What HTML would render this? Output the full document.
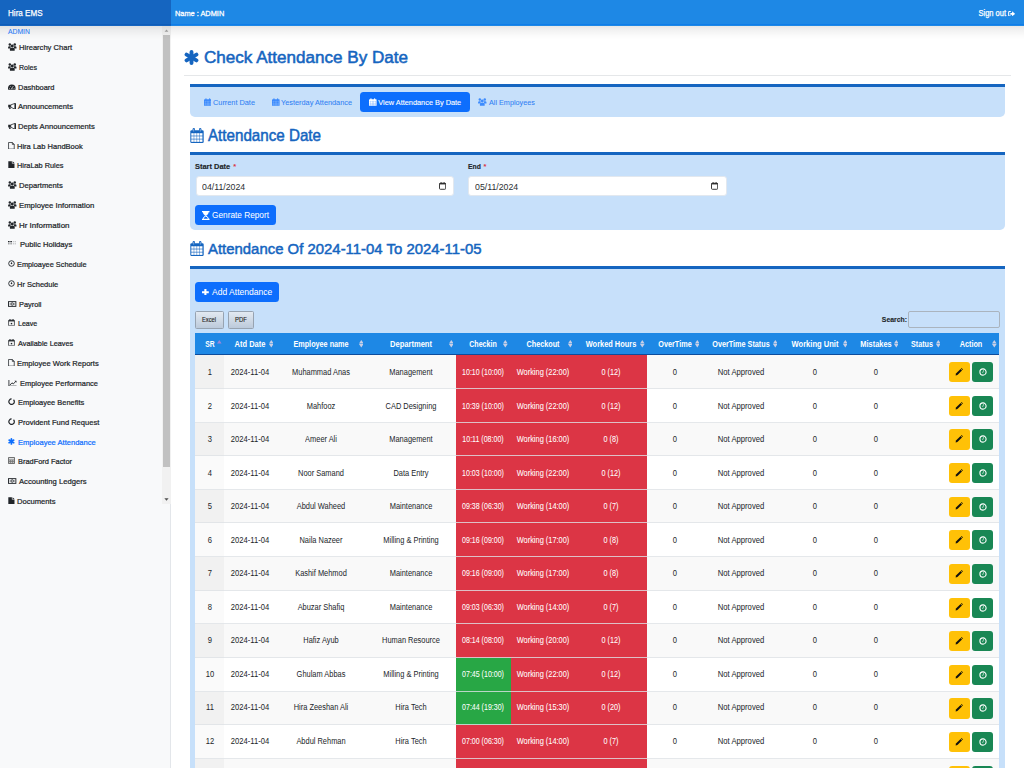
<!DOCTYPE html>
<html><head><meta charset="utf-8"><title>Check Attendance By Date</title>
<style>
*{box-sizing:border-box;margin:0;padding:0}
html,body{width:1024px;height:768px;overflow:hidden;background:#fff;font-family:"Liberation Sans", sans-serif}
body{position:relative}
.t{position:absolute;white-space:nowrap}
.r{position:absolute;display:block}
</style></head><body>
<div class="r" style="left:0.00px;top:0.00px;width:1024.00px;height:25.50px;background:#1e88e5"></div>
<div class="r" style="left:0.00px;top:0.00px;width:171.00px;height:25.50px;background:#1565c0"></div>
<div class="r" style="left:171.00px;top:23.90px;width:853.00px;height:1.60px;background:#0f7de9"></div>
<div class="r" style="left:0.00px;top:23.90px;width:171.00px;height:1.60px;background:#0f5cb8"></div>
<div class="t" style="left:8.40px;transform-origin:0 0;top:8px;font-size:9.072px;line-height:10px;color:#fff;font-weight:400;-webkit-text-stroke:0.25px #fff;transform:scaleX(0.8922);">Hira EMS</div>
<div class="t" style="left:175.00px;transform-origin:0 0;top:9px;font-size:7.844px;line-height:9px;color:#fff;font-weight:400;-webkit-text-stroke:0.28px #fff;transform:scaleX(0.9434);">Name : ADMIN</div>
<div class="t" style="left:706.30px;width:300px;text-align:right;transform-origin:100% 0;top:8px;font-size:8.512px;line-height:10px;color:#fff;font-weight:400;-webkit-text-stroke:0.25px #fff;transform:scaleX(0.8813);">Sign out</div>
<svg class="r" style="left:1008.00px;top:10.60px" width="7.4" height="5.6" viewBox="0 0 9 7"><path d="M3.4 0.7 H1.6 Q0.7 0.7 0.7 1.6 V5.4 Q0.7 6.3 1.6 6.3 H3.4" fill="none" stroke="#fff" stroke-width="1.3"/><path d="M2.8 2.4 H5 V0.3 L8.8 3.5 L5 6.7 V4.6 H2.8Z" fill="#fff"/></svg>
<div class="r" style="left:0.00px;top:25.50px;width:171.00px;height:742.50px;background:#f8f9fa;border-right:1px solid #e3e6ea"></div>
<div class="r" style="left:162.00px;top:25.50px;width:8.50px;height:478.00px;background:#f1f1f1"></div>
<div class="r" style="left:163.00px;top:35.00px;width:7.00px;height:432.00px;background:#c1c1c1"></div>
<svg class="r" style="left:163.00px;top:28.00px" width="7" height="5" viewBox="0 0 7 5"><path d="M1.6 3.8 L3.5 1.6 L5.4 3.8Z" fill="#a3a3a3"/></svg>
<svg class="r" style="left:163.00px;top:496.50px" width="7" height="5" viewBox="0 0 7 5"><path d="M1.4 1.3 L3.5 3.7 L5.6 1.3Z" fill="#505050"/></svg>
<div class="r" style="left:0;top:25.5px;width:1024px;height:14px;background:linear-gradient(rgba(0,0,0,0.095),rgba(0,0,0,0.05) 30%,rgba(0,0,0,0.015) 70%,rgba(0,0,0,0))"></div>
<div class="t" style="left:8.40px;transform-origin:0 0;top:27px;font-size:7.616px;line-height:9px;color:#2b7cf6;font-weight:400;-webkit-text-stroke:0.1px #2b7cf6;transform:scaleX(0.8887);">ADMIN</div>
<div class="t" style="left:18.75px;transform-origin:0 0;top:43px;font-size:7.875px;line-height:9px;color:#212529;font-weight:400;-webkit-text-stroke:0.22px #212529;transform:scaleX(0.9631);">Hirearchy Chart</div>
<svg class="r" style="left:8.20px;top:42.80px" width="8.6" height="7.8" viewBox="0 0 16 14"><g fill="#212529"><circle cx="3.4" cy="2.6" r="2.3"/><circle cx="12.6" cy="2.6" r="2.3"/><circle cx="8" cy="5.2" r="2.7"/><path d="M0.2 10.2 V7.8 Q0.2 5.6 2.6 5.6 H4.6 Q5.4 5.6 5.2 6.6 Q4.4 8.6 4.6 10.2Z"/><path d="M15.8 10.2 V7.8 Q15.8 5.6 13.4 5.6 H11.4 Q10.6 5.6 10.8 6.6 Q11.6 8.6 11.4 10.2Z"/><path d="M3.6 14 V11.4 Q3.6 8.8 6 8.8 H10 Q12.4 8.8 12.4 11.4 V14Z"/></g></svg>
<div class="t" style="left:18.75px;transform-origin:0 0;top:63px;font-size:7.875px;line-height:9px;color:#212529;font-weight:400;-webkit-text-stroke:0.22px #212529;transform:scaleX(0.8958);">Roles</div>
<svg class="r" style="left:8.20px;top:62.80px" width="8.6" height="7.8" viewBox="0 0 16 14"><g fill="#212529"><circle cx="3.4" cy="2.6" r="2.3"/><circle cx="12.6" cy="2.6" r="2.3"/><circle cx="8" cy="5.2" r="2.7"/><path d="M0.2 10.2 V7.8 Q0.2 5.6 2.6 5.6 H4.6 Q5.4 5.6 5.2 6.6 Q4.4 8.6 4.6 10.2Z"/><path d="M15.8 10.2 V7.8 Q15.8 5.6 13.4 5.6 H11.4 Q10.6 5.6 10.8 6.6 Q11.6 8.6 11.4 10.2Z"/><path d="M3.6 14 V11.4 Q3.6 8.8 6 8.8 H10 Q12.4 8.8 12.4 11.4 V14Z"/></g></svg>
<div class="t" style="left:18.25px;transform-origin:0 0;top:83px;font-size:7.875px;line-height:9px;color:#212529;font-weight:400;-webkit-text-stroke:0.22px #212529;transform:scaleX(0.9492);">Dashboard</div>
<svg class="r" style="left:8.40px;top:83.70px" width="7.6" height="6.4" viewBox="0 0 16 11.5"><path d="M0.4 11 Q0 9.5 0 8 A8 8 0 0 1 16 8 Q16 9.5 15.6 11Z" fill="#212529"/><g fill="#f8f9fa"><circle cx="3.2" cy="8" r="1"/><circle cx="5" cy="4" r="1"/><circle cx="11" cy="4" r="1"/><circle cx="12.8" cy="8" r="1"/><path d="M8 10 L6.8 9.2 L9.6 3.6 L10 3.8 L9 9.6Z"/></g></svg>
<div class="t" style="left:18.25px;transform-origin:0 0;top:102px;font-size:7.875px;line-height:9px;color:#212529;font-weight:400;-webkit-text-stroke:0.22px #212529;transform:scaleX(0.9681);">Announcements</div>
<svg class="r" style="left:8.00px;top:102.70px" width="8.2" height="6.8" viewBox="0 0 16 14"><g fill="#212529"><rect x="0" y="3.6" width="5.2" height="5.4"/><path d="M1.2 9 H4.4 L5.4 13.6 H2.6Z"/><rect x="13.6" y="0" width="2.4" height="13.6" rx="1"/></g><path d="M5.2 3.9 L13.8 0.9 V12.7 L5.2 8.7Z" fill="none" stroke="#212529" stroke-width="1.6" stroke-linejoin="round"/></svg>
<div class="t" style="left:18.25px;transform-origin:0 0;top:122px;font-size:7.875px;line-height:9px;color:#212529;font-weight:400;-webkit-text-stroke:0.22px #212529;transform:scaleX(0.9704);">Depts Announcements</div>
<svg class="r" style="left:8.00px;top:122.70px" width="8.2" height="6.8" viewBox="0 0 16 14"><g fill="#212529"><rect x="0" y="3.6" width="5.2" height="5.4"/><path d="M1.2 9 H4.4 L5.4 13.6 H2.6Z"/><rect x="13.6" y="0" width="2.4" height="13.6" rx="1"/></g><path d="M5.2 3.9 L13.8 0.9 V12.7 L5.2 8.7Z" fill="none" stroke="#212529" stroke-width="1.6" stroke-linejoin="round"/></svg>
<div class="t" style="left:17.00px;transform-origin:0 0;top:142px;font-size:7.875px;line-height:9px;color:#212529;font-weight:400;-webkit-text-stroke:0.22px #212529;transform:scaleX(0.9585);">Hira Lab HandBook</div>
<svg class="r" style="left:8.40px;top:141.90px" width="6.8" height="7.6" viewBox="0 0 14 16"><path d="M1 1 H9 L13 5 V15 H1Z M9 1 V5 H13" fill="none" stroke="#212529" stroke-width="1.6" stroke-linejoin="round"/></svg>
<div class="t" style="left:17.00px;transform-origin:0 0;top:161px;font-size:7.875px;line-height:9px;color:#212529;font-weight:400;-webkit-text-stroke:0.22px #212529;transform:scaleX(0.9335);">HiraLab Rules</div>
<svg class="r" style="left:8.40px;top:160.90px" width="6.8" height="7.6" viewBox="0 0 14 16"><path d="M0.5 0.5 H8 V5.5 H13.5 V15.5 H0.5Z M9.4 0.5 L13.5 4.3 H9.4Z" fill="#212529"/></svg>
<div class="t" style="left:18.75px;transform-origin:0 0;top:181px;font-size:7.875px;line-height:9px;color:#212529;font-weight:400;-webkit-text-stroke:0.22px #212529;transform:scaleX(0.9722);">Departments</div>
<svg class="r" style="left:8.20px;top:180.80px" width="8.6" height="7.8" viewBox="0 0 16 14"><g fill="#212529"><circle cx="3.4" cy="2.6" r="2.3"/><circle cx="12.6" cy="2.6" r="2.3"/><circle cx="8" cy="5.2" r="2.7"/><path d="M0.2 10.2 V7.8 Q0.2 5.6 2.6 5.6 H4.6 Q5.4 5.6 5.2 6.6 Q4.4 8.6 4.6 10.2Z"/><path d="M15.8 10.2 V7.8 Q15.8 5.6 13.4 5.6 H11.4 Q10.6 5.6 10.8 6.6 Q11.6 8.6 11.4 10.2Z"/><path d="M3.6 14 V11.4 Q3.6 8.8 6 8.8 H10 Q12.4 8.8 12.4 11.4 V14Z"/></g></svg>
<div class="t" style="left:18.75px;transform-origin:0 0;top:201px;font-size:7.875px;line-height:9px;color:#212529;font-weight:400;-webkit-text-stroke:0.22px #212529;transform:scaleX(0.9843);">Employee Information</div>
<svg class="r" style="left:8.20px;top:200.80px" width="8.6" height="7.8" viewBox="0 0 16 14"><g fill="#212529"><circle cx="3.4" cy="2.6" r="2.3"/><circle cx="12.6" cy="2.6" r="2.3"/><circle cx="8" cy="5.2" r="2.7"/><path d="M0.2 10.2 V7.8 Q0.2 5.6 2.6 5.6 H4.6 Q5.4 5.6 5.2 6.6 Q4.4 8.6 4.6 10.2Z"/><path d="M15.8 10.2 V7.8 Q15.8 5.6 13.4 5.6 H11.4 Q10.6 5.6 10.8 6.6 Q11.6 8.6 11.4 10.2Z"/><path d="M3.6 14 V11.4 Q3.6 8.8 6 8.8 H10 Q12.4 8.8 12.4 11.4 V14Z"/></g></svg>
<div class="t" style="left:18.75px;transform-origin:0 0;top:221px;font-size:7.875px;line-height:9px;color:#212529;font-weight:400;-webkit-text-stroke:0.22px #212529;transform:scaleX(1.0141);">Hr Information</div>
<svg class="r" style="left:8.20px;top:220.80px" width="8.6" height="7.8" viewBox="0 0 16 14"><g fill="#212529"><circle cx="3.4" cy="2.6" r="2.3"/><circle cx="12.6" cy="2.6" r="2.3"/><circle cx="8" cy="5.2" r="2.7"/><path d="M0.2 10.2 V7.8 Q0.2 5.6 2.6 5.6 H4.6 Q5.4 5.6 5.2 6.6 Q4.4 8.6 4.6 10.2Z"/><path d="M15.8 10.2 V7.8 Q15.8 5.6 13.4 5.6 H11.4 Q10.6 5.6 10.8 6.6 Q11.6 8.6 11.4 10.2Z"/><path d="M3.6 14 V11.4 Q3.6 8.8 6 8.8 H10 Q12.4 8.8 12.4 11.4 V14Z"/></g></svg>
<div class="t" style="left:19.75px;transform-origin:0 0;top:240px;font-size:7.875px;line-height:9px;color:#212529;font-weight:400;-webkit-text-stroke:0.22px #212529;transform:scaleX(0.9724);">Public Holidays</div>
<svg class="r" style="left:8.40px;top:241.30px" width="8" height="6" viewBox="0 0 16 12"><g fill="#212529"><rect x="0" y="0" width="3.2" height="2.6"/><rect x="4.6" y="0" width="3.2" height="2.6"/></g><g fill="#212529" opacity="0.45"><rect x="0" y="4.2" width="3.2" height="2.6"/><rect x="4.6" y="4.2" width="3.2" height="2.6"/></g><g fill="#212529" opacity="0.22"><rect x="9.6" y="0" width="3.2" height="2.6"/><rect x="9.6" y="4.2" width="3.2" height="2.6"/><rect x="14" y="0" width="2" height="2.6"/><rect x="14" y="4.2" width="2" height="2.6"/></g></svg>
<div class="t" style="left:17.00px;transform-origin:0 0;top:260px;font-size:7.875px;line-height:9px;color:#212529;font-weight:400;-webkit-text-stroke:0.22px #212529;transform:scaleX(0.9356);">Emploayee Schedule</div>
<svg class="r" style="left:8.30px;top:260.40px" width="7" height="7" viewBox="0 0 16 16"><circle cx="8" cy="8" r="6.4" fill="none" stroke="#212529" stroke-width="2.1"/><circle cx="8" cy="8" r="1.9" fill="#212529"/><path d="M8 4.6 V8" fill="none" stroke="#212529" stroke-width="1.2"/></svg>
<div class="t" style="left:17.00px;transform-origin:0 0;top:280px;font-size:7.875px;line-height:9px;color:#212529;font-weight:400;-webkit-text-stroke:0.22px #212529;transform:scaleX(0.9538);">Hr Schedule</div>
<svg class="r" style="left:8.30px;top:280.40px" width="7" height="7" viewBox="0 0 16 16"><circle cx="8" cy="8" r="6.4" fill="none" stroke="#212529" stroke-width="2.1"/><circle cx="8" cy="8" r="1.9" fill="#212529"/><path d="M8 4.6 V8" fill="none" stroke="#212529" stroke-width="1.2"/></svg>
<div class="t" style="left:18.75px;transform-origin:0 0;top:300px;font-size:7.875px;line-height:9px;color:#212529;font-weight:400;-webkit-text-stroke:0.22px #212529;transform:scaleX(0.9363);">Payroll</div>
<svg class="r" style="left:8.30px;top:301.30px" width="8.4" height="6" viewBox="0 0 16 11"><rect x="1" y="1" width="14" height="9" fill="none" stroke="#212529" stroke-width="1.8"/><circle cx="8" cy="5.5" r="2.4" fill="none" stroke="#212529" stroke-width="1.6"/><rect x="3" y="4.7" width="1.6" height="1.6" fill="#212529"/><rect x="11.4" y="4.7" width="1.6" height="1.6" fill="#212529"/></svg>
<div class="t" style="left:18.00px;transform-origin:0 0;top:319px;font-size:7.875px;line-height:9px;color:#212529;font-weight:400;-webkit-text-stroke:0.22px #212529;transform:scaleX(0.8986);">Leave</div>
<svg class="r" style="left:8.40px;top:319.00px" width="7" height="7.3" viewBox="0 0 14 15"><rect x="1" y="2.4" width="12" height="11.6" rx="1.2" fill="none" stroke="#212529" stroke-width="1.5"/><rect x="1" y="2.4" width="12" height="2.6" fill="#212529"/><rect x="3" y="0" width="1.8" height="3.4" fill="#212529"/><rect x="9.2" y="0" width="1.8" height="3.4" fill="#212529"/><rect x="5.5" y="8" width="3" height="3" fill="#212529"/></svg>
<div class="t" style="left:18.00px;transform-origin:0 0;top:339px;font-size:7.875px;line-height:9px;color:#212529;font-weight:400;-webkit-text-stroke:0.22px #212529;transform:scaleX(0.9320);">Available Leaves</div>
<svg class="r" style="left:8.40px;top:339.00px" width="7" height="7.3" viewBox="0 0 14 15"><rect x="1" y="2.4" width="12" height="11.6" rx="1.2" fill="none" stroke="#212529" stroke-width="1.5"/><rect x="1" y="2.4" width="12" height="2.6" fill="#212529"/><rect x="3" y="0" width="1.8" height="3.4" fill="#212529"/><rect x="9.2" y="0" width="1.8" height="3.4" fill="#212529"/><rect x="5.5" y="8" width="3" height="3" fill="#212529"/></svg>
<div class="t" style="left:17.00px;transform-origin:0 0;top:359px;font-size:7.875px;line-height:9px;color:#212529;font-weight:400;-webkit-text-stroke:0.22px #212529;transform:scaleX(0.9614);">Employee Work Reports</div>
<svg class="r" style="left:8.40px;top:358.90px" width="6.8" height="7.6" viewBox="0 0 14 16"><path d="M1 1 H9 L13 5 V15 H1Z M9 1 V5 H13" fill="none" stroke="#212529" stroke-width="1.6" stroke-linejoin="round"/></svg>
<div class="t" style="left:19.50px;transform-origin:0 0;top:379px;font-size:7.875px;line-height:9px;color:#212529;font-weight:400;-webkit-text-stroke:0.22px #212529;transform:scaleX(0.9498);">Employee Performance</div>
<svg class="r" style="left:8.20px;top:379.80px" width="9" height="6.6" viewBox="0 0 16 13"><path d="M0.9 0 V12.1 H16" fill="none" stroke="#212529" stroke-width="1.7"/><path d="M3 10 L7 5.6 L9.6 7.8 L14.6 2.6" fill="none" stroke="#212529" stroke-width="1.8"/><path d="M11.8 1.4 H15.8 V5.4Z" fill="#212529"/></svg>
<div class="t" style="left:18.00px;transform-origin:0 0;top:398px;font-size:7.875px;line-height:9px;color:#212529;font-weight:400;-webkit-text-stroke:0.22px #212529;transform:scaleX(0.9477);">Emploayee Benefits</div>
<svg class="r" style="left:8.40px;top:398.10px" width="7.2" height="7.4" viewBox="0 0 16 16"><path d="M8 1.9 A6.1 6.1 0 1 0 12.3 3.7" fill="none" stroke="#212529" stroke-width="2.7"/></svg>
<div class="t" style="left:18.00px;transform-origin:0 0;top:418px;font-size:7.875px;line-height:9px;color:#212529;font-weight:400;-webkit-text-stroke:0.22px #212529;transform:scaleX(0.9585);">Provident Fund Request</div>
<svg class="r" style="left:8.40px;top:418.10px" width="7.2" height="7.4" viewBox="0 0 16 16"><path d="M8 1.9 A6.1 6.1 0 1 0 12.3 3.7" fill="none" stroke="#212529" stroke-width="2.7"/></svg>
<div class="t" style="left:17.50px;transform-origin:0 0;top:438px;font-size:7.875px;line-height:9px;color:#0d6efd;font-weight:400;-webkit-text-stroke:0.22px #0d6efd;transform:scaleX(0.9617);">Emploayee Attendance</div>
<svg class="r" style="left:8.40px;top:438.40px" width="6.8" height="6.8" viewBox="0 0 100 100"><g stroke="#0d6efd" stroke-width="26" stroke-linecap="round"><line x1="50" y1="13" x2="50" y2="87"/><line x1="17" y1="31" x2="83" y2="69"/><line x1="17" y1="69" x2="83" y2="31"/></g></svg>
<div class="t" style="left:18.00px;transform-origin:0 0;top:457px;font-size:7.875px;line-height:9px;color:#212529;font-weight:400;-webkit-text-stroke:0.22px #212529;transform:scaleX(0.9437);">BradFord Factor</div>
<svg class="r" style="left:8.40px;top:457.20px" width="7" height="7" viewBox="0 0 14 14"><rect x="0" y="0" width="14" height="14" rx="1.5" fill="#444" opacity="0.75"/><rect x="2" y="2" width="10" height="3" fill="#f8f9fa" opacity="0.8"/><g fill="#f8f9fa" opacity="0.6"><rect x="2" y="6.5" width="2.5" height="2"/><rect x="5.8" y="6.5" width="2.5" height="2"/><rect x="9.5" y="6.5" width="2.5" height="2"/><rect x="2" y="10" width="2.5" height="2"/><rect x="5.8" y="10" width="2.5" height="2"/><rect x="9.5" y="10" width="2.5" height="2"/></g></svg>
<div class="t" style="left:18.75px;transform-origin:0 0;top:477px;font-size:7.875px;line-height:9px;color:#212529;font-weight:400;-webkit-text-stroke:0.22px #212529;transform:scaleX(0.9714);">Accounting Ledgers</div>
<svg class="r" style="left:8.30px;top:478.30px" width="8.4" height="6" viewBox="0 0 16 11"><rect x="1" y="1" width="14" height="9" fill="none" stroke="#212529" stroke-width="1.8"/><circle cx="8" cy="5.5" r="2.4" fill="none" stroke="#212529" stroke-width="1.6"/><rect x="3" y="4.7" width="1.6" height="1.6" fill="#212529"/><rect x="11.4" y="4.7" width="1.6" height="1.6" fill="#212529"/></svg>
<div class="t" style="left:17.00px;transform-origin:0 0;top:497px;font-size:7.875px;line-height:9px;color:#212529;font-weight:400;-webkit-text-stroke:0.22px #212529;transform:scaleX(0.9686);">Documents</div>
<svg class="r" style="left:8.40px;top:496.90px" width="6.8" height="7.6" viewBox="0 0 14 16"><path d="M0.5 0.5 H8 V5.5 H13.5 V15.5 H0.5Z M9.4 0.5 L13.5 4.3 H9.4Z" fill="#212529"/></svg>
<svg class="r" style="left:183.75px;top:50.00px" width="15" height="15" viewBox="0 0 100 100"><g stroke="#1565c0" stroke-width="26" stroke-linecap="round"><line x1="50" y1="13" x2="50" y2="87"/><line x1="17" y1="31" x2="83" y2="69"/><line x1="17" y1="69" x2="83" y2="31"/></g></svg>
<div class="t" style="left:204.25px;transform-origin:0 0;top:47px;font-size:17.411px;line-height:20px;color:#1565c0;font-weight:400;-webkit-text-stroke:0.55px #1565c0;transform:scaleX(0.9805);">Check Attendance By Date</div>
<div class="r" style="left:183.50px;top:75.00px;width:827.50px;height:1.00px;background:#e5e7e9"></div>
<div class="r" style="left:190.00px;top:84.00px;width:815.00px;height:33.00px;background:#c7e0fa;border-top:3px solid #1565c0;border-radius:0 0 5px 5px"></div>
<svg class="r" style="left:203.50px;top:98.20px" width="7.6" height="8.1" viewBox="0 0 100 100"><g fill="#3d8bfd"><rect x="0" y="14" width="100" height="86" rx="6"/><rect x="18" y="0" width="16" height="26" rx="8"/><rect x="66" y="0" width="16" height="26" rx="8"/></g><g fill="#c7e0fa" opacity="0.55"><rect x="6" y="46" width="88" height="4"/><rect x="6" y="64" width="88" height="4"/><rect x="6" y="82" width="88" height="4"/><rect x="22" y="34" width="4" height="60"/><rect x="41" y="34" width="4" height="60"/><rect x="60" y="34" width="4" height="60"/><rect x="79" y="34" width="4" height="60"/></g></svg>
<div class="t" style="left:212.90px;transform-origin:0 0;top:98px;font-size:7.320px;line-height:9px;color:#2f7ff5;font-weight:400;-webkit-text-stroke:0.05px #2f7ff5;transform:scaleX(1.0030);">Current Date</div>
<svg class="r" style="left:272.00px;top:98.20px" width="7.6" height="8.1" viewBox="0 0 100 100"><g fill="#3d8bfd"><rect x="0" y="14" width="100" height="86" rx="6"/><rect x="18" y="0" width="16" height="26" rx="8"/><rect x="66" y="0" width="16" height="26" rx="8"/></g><g fill="#c7e0fa" opacity="0.55"><rect x="6" y="46" width="88" height="4"/><rect x="6" y="64" width="88" height="4"/><rect x="6" y="82" width="88" height="4"/><rect x="22" y="34" width="4" height="60"/><rect x="41" y="34" width="4" height="60"/><rect x="60" y="34" width="4" height="60"/><rect x="79" y="34" width="4" height="60"/></g></svg>
<div class="t" style="left:281.20px;transform-origin:0 0;top:98px;font-size:7.320px;line-height:9px;color:#2f7ff5;font-weight:400;-webkit-text-stroke:0.05px #2f7ff5;transform:scaleX(1.0015);">Yesterday Attendance</div>
<div class="r" style="left:360.30px;top:92.00px;width:109.50px;height:19.90px;background:#0d6efd;border-radius:3.5px"></div>
<svg class="r" style="left:369.00px;top:98.20px" width="7.6" height="8.1" viewBox="0 0 100 100"><g fill="#fff"><rect x="0" y="14" width="100" height="86" rx="6"/><rect x="18" y="0" width="16" height="26" rx="8"/><rect x="66" y="0" width="16" height="26" rx="8"/></g><g fill="#0d6efd" opacity="0.55"><rect x="6" y="46" width="88" height="4"/><rect x="6" y="64" width="88" height="4"/><rect x="6" y="82" width="88" height="4"/><rect x="22" y="34" width="4" height="60"/><rect x="41" y="34" width="4" height="60"/><rect x="60" y="34" width="4" height="60"/><rect x="79" y="34" width="4" height="60"/></g></svg>
<div class="t" style="left:378.30px;transform-origin:0 0;top:98px;font-size:7.370px;line-height:9px;color:#fff;font-weight:400;-webkit-text-stroke:0.1px #fff;">View Attendance By Date</div>
<svg class="r" style="left:478.00px;top:98.20px" width="8.6" height="7.8" viewBox="0 0 16 14"><g fill="#3d8bfd"><circle cx="3.4" cy="2.6" r="2.3"/><circle cx="12.6" cy="2.6" r="2.3"/><circle cx="8" cy="5.2" r="2.7"/><path d="M0.2 10.2 V7.8 Q0.2 5.6 2.6 5.6 H4.6 Q5.4 5.6 5.2 6.6 Q4.4 8.6 4.6 10.2Z"/><path d="M15.8 10.2 V7.8 Q15.8 5.6 13.4 5.6 H11.4 Q10.6 5.6 10.8 6.6 Q11.6 8.6 11.4 10.2Z"/><path d="M3.6 14 V11.4 Q3.6 8.8 6 8.8 H10 Q12.4 8.8 12.4 11.4 V14Z"/></g></svg>
<div class="t" style="left:488.60px;transform-origin:0 0;top:98px;font-size:7.230px;line-height:9px;color:#2f7ff5;font-weight:400;-webkit-text-stroke:0.05px #2f7ff5;transform:scaleX(1.0011);">All Employees</div>
<svg class="r" style="left:190.00px;top:127.80px" width="14" height="15" viewBox="0 0 14 15"><g fill="#1565c0"><rect x="0.3" y="2.2" width="13.4" height="12.8" rx="1.3"/><rect x="2.6" y="0" width="2.4" height="4.2" rx="1.2"/><rect x="9.0" y="0" width="2.4" height="4.2" rx="1.2"/></g><g fill="#fff"><rect x="3.4" y="0.9" width="0.8" height="2.6" opacity="0.6"/><rect x="9.8" y="0.9" width="0.8" height="2.6" opacity="0.6"/><rect x="1.30" y="5.20" width="2.45" height="2.45"/><rect x="4.20" y="5.20" width="2.45" height="2.45"/><rect x="7.10" y="5.20" width="2.45" height="2.45"/><rect x="10.00" y="5.20" width="2.45" height="2.45"/><rect x="1.30" y="8.30" width="2.45" height="2.45"/><rect x="4.20" y="8.30" width="2.45" height="2.45"/><rect x="7.10" y="8.30" width="2.45" height="2.45"/><rect x="10.00" y="8.30" width="2.45" height="2.45"/><rect x="1.30" y="11.40" width="2.45" height="2.45"/><rect x="4.20" y="11.40" width="2.45" height="2.45"/><rect x="7.10" y="11.40" width="2.45" height="2.45"/><rect x="10.00" y="11.40" width="2.45" height="2.45"/></g></svg>
<div class="t" style="left:208.20px;transform-origin:0 0;top:127px;font-size:15.701px;line-height:17px;color:#1565c0;font-weight:400;-webkit-text-stroke:0.5px #1565c0;transform:scaleX(0.9668);">Attendance Date</div>
<div class="r" style="left:190.00px;top:152.30px;width:815.00px;height:77.50px;background:#c7e0fa;border-top:3px solid #1565c0;border-radius:0 0 5px 5px"></div>
<div class="t" style="left:195.25px;transform-origin:0 0;top:162px;font-size:7.450px;line-height:9px;color:#212529;font-weight:700;-webkit-text-stroke:0.15px #212529;transform:scaleX(1.0017);">Start Date</div>
<div class="t" style="left:233.30px;transform-origin:0 0;top:162px;font-size:7.450px;line-height:9px;color:#dc3545;font-weight:700;">*</div>
<div class="t" style="left:467.70px;transform-origin:0 0;top:162px;font-size:7.450px;line-height:9px;color:#212529;font-weight:700;-webkit-text-stroke:0.15px #212529;transform:scaleX(0.9102);">End</div>
<div class="t" style="left:483.40px;transform-origin:0 0;top:162px;font-size:7.450px;line-height:9px;color:#dc3545;font-weight:700;">*</div>
<div class="r" style="left:195.70px;top:176.30px;width:258.70px;height:19.50px;background:#fff;border-radius:3px;border:1px solid #e2e8ef"></div>
<div class="r" style="left:468.00px;top:176.30px;width:258.60px;height:19.50px;background:#fff;border-radius:3px;border:1px solid #e2e8ef"></div>
<div class="t" style="left:202.00px;transform-origin:0 0;top:182px;font-size:9.209px;line-height:10px;color:#2b2f33;font-weight:400;transform:scaleX(0.9545);">04/11/2024</div>
<div class="t" style="left:474.50px;transform-origin:0 0;top:182px;font-size:9.209px;line-height:10px;color:#2b2f33;font-weight:400;transform:scaleX(0.9545);">05/11/2024</div>
<svg class="r" style="left:439.00px;top:182.00px" width="7.2" height="7.8" viewBox="0 0 7.2 7.8"><rect x="0.5" y="1.2" width="6.2" height="6.1" rx="0.9" fill="none" stroke="#222" stroke-width="0.9"/><rect x="0.5" y="1.2" width="6.2" height="1.2" fill="#222"/><rect x="1.7" y="0.1" width="0.8" height="1.6" fill="#222"/><rect x="4.7" y="0.1" width="0.8" height="1.6" fill="#222"/></svg>
<svg class="r" style="left:711.00px;top:182.00px" width="7.2" height="7.8" viewBox="0 0 7.2 7.8"><rect x="0.5" y="1.2" width="6.2" height="6.1" rx="0.9" fill="none" stroke="#222" stroke-width="0.9"/><rect x="0.5" y="1.2" width="6.2" height="1.2" fill="#222"/><rect x="1.7" y="0.1" width="0.8" height="1.6" fill="#222"/><rect x="4.7" y="0.1" width="0.8" height="1.6" fill="#222"/></svg>
<div class="r" style="left:195.00px;top:204.90px;width:81.00px;height:20.00px;background:#0d6efd;border-radius:3.5px"></div>
<svg class="r" style="left:202.00px;top:210.60px" width="7.5" height="9" viewBox="0 0 7.5 9"><path d="M0 0 H7.5 V1.3 H0Z M0 7.7 H7.5 V9 H0Z" fill="#fff"/><path d="M0.8 1.1 H6.7 Q6.5 3.9 4.3 4.7 H3.2 Q1 3.9 0.8 1.1Z" fill="#fff"/><path d="M3.75 5.1 Q1.4 5.6 1.1 8 M3.75 5.1 Q6.1 5.6 6.4 8" fill="none" stroke="#fff" stroke-width="1"/></svg>
<div class="t" style="left:212.20px;transform-origin:0 0;top:210px;font-size:9.262px;line-height:10px;color:#fff;font-weight:400;-webkit-text-stroke:0.03px #fff;transform:scaleX(0.8939);">Genrate Report</div>
<svg class="r" style="left:190.10px;top:240.80px" width="14" height="15.1" viewBox="0 0 14 15"><g fill="#1565c0"><rect x="0.3" y="2.2" width="13.4" height="12.8" rx="1.3"/><rect x="2.6" y="0" width="2.4" height="4.2" rx="1.2"/><rect x="9.0" y="0" width="2.4" height="4.2" rx="1.2"/></g><g fill="#fff"><rect x="3.4" y="0.9" width="0.8" height="2.6" opacity="0.6"/><rect x="9.8" y="0.9" width="0.8" height="2.6" opacity="0.6"/><rect x="1.30" y="5.20" width="2.45" height="2.45"/><rect x="4.20" y="5.20" width="2.45" height="2.45"/><rect x="7.10" y="5.20" width="2.45" height="2.45"/><rect x="10.00" y="5.20" width="2.45" height="2.45"/><rect x="1.30" y="8.30" width="2.45" height="2.45"/><rect x="4.20" y="8.30" width="2.45" height="2.45"/><rect x="7.10" y="8.30" width="2.45" height="2.45"/><rect x="10.00" y="8.30" width="2.45" height="2.45"/><rect x="1.30" y="11.40" width="2.45" height="2.45"/><rect x="4.20" y="11.40" width="2.45" height="2.45"/><rect x="7.10" y="11.40" width="2.45" height="2.45"/><rect x="10.00" y="11.40" width="2.45" height="2.45"/></g></svg>
<div class="t" style="left:208.00px;transform-origin:0 0;top:240px;font-size:15.432px;line-height:17px;color:#1565c0;font-weight:400;-webkit-text-stroke:0.5px #1565c0;transform:scaleX(0.9669);">Attendance Of 2024-11-04 To 2024-11-05</div>
<div class="r" style="left:190.00px;top:265.60px;width:815.00px;height:512.40px;background:#c7e0fa;border-top:3px solid #1565c0"></div>
<div class="r" style="left:195.00px;top:282.20px;width:84.00px;height:20.00px;background:#0d6efd;border-radius:3.5px"></div>
<svg class="r" style="left:202.10px;top:288.60px" width="6.8" height="6.6" viewBox="0 0 6.8 6.6"><path d="M2.35 0 H4.45 V2.25 H6.8 V4.35 H4.45 V6.6 H2.35 V4.35 H0 V2.25 H2.35Z" fill="#fff"/></svg>
<div class="t" style="left:211.60px;transform-origin:0 0;top:286px;font-size:9.677px;line-height:11px;color:#fff;font-weight:400;-webkit-text-stroke:0.03px #fff;transform:scaleX(0.8843);">Add Attendance</div>
<div class="r" style="left:195.00px;top:311.20px;width:28.70px;height:17.80px;background:linear-gradient(#e2e9f1,#bccadb);border:1px solid #97a3b1;border-radius:1.5px"></div>
<div class="t" style="left:59.35px;width:300px;text-align:center;transform-origin:50% 0;top:316px;font-size:6.418px;line-height:7px;color:#222;font-weight:400;-webkit-text-stroke:0.12px #222;transform:scaleX(0.8997);">Excel</div>
<div class="r" style="left:228.30px;top:311.20px;width:25.60px;height:17.80px;background:linear-gradient(#e2e9f1,#bccadb);border:1px solid #97a3b1;border-radius:1.5px"></div>
<div class="t" style="left:91.10px;width:300px;text-align:center;transform-origin:50% 0;top:316px;font-size:6.418px;line-height:7px;color:#222;font-weight:400;-webkit-text-stroke:0.12px #222;transform:scaleX(0.9210);">PDF</div>
<div class="t" style="left:606.50px;width:300px;text-align:right;transform-origin:100% 0;top:315px;font-size:7.694px;line-height:9px;color:#212529;font-weight:700;-webkit-text-stroke:0.1px #212529;transform:scaleX(0.8935);">Search:</div>
<div class="r" style="left:908.30px;top:311.10px;width:91.30px;height:17.30px;border:1px solid #aab4be;border-radius:2px;background:transparent"></div>
<div class="r" style="left:195.00px;top:332.90px;width:804.40px;height:20.90px;background:#1e88e5"></div>
<div class="r" style="left:195.00px;top:353.80px;width:804.40px;height:1.00px;background:#0d4c9c"></div>
<div class="t" style="left:59.70px;width:300px;text-align:center;transform-origin:50% 0;top:340px;font-size:8.176px;line-height:9px;color:#fff;font-weight:700;transform:scaleX(0.8287);">SR</div>
<svg class="r" style="left:217.30px;top:340.20px" width="4.6" height="7.4" viewBox="0 0 4.6 7.4"><path d="M0 3.4 L2.3 0 L4.6 3.4Z" fill="#9d86d8"/><path d="M0 4 L2.3 7.4 L4.6 4Z" fill="rgba(0,0,0,0)"/></svg>
<div class="t" style="left:100.20px;width:300px;text-align:center;transform-origin:50% 0;top:340px;font-size:8.176px;line-height:9px;color:#fff;font-weight:700;transform:scaleX(0.9181);">Atd Date</div>
<svg class="r" style="left:268.90px;top:340.20px" width="4.6" height="7.4" viewBox="0 0 4.6 7.4"><path d="M0 3.4 L2.3 0 L4.6 3.4Z" fill="#c9cfe6"/><path d="M0 4 L2.3 7.4 L4.6 4Z" fill="#c9cfe6"/></svg>
<div class="t" style="left:171.00px;width:300px;text-align:center;transform-origin:50% 0;top:340px;font-size:8.176px;line-height:9px;color:#fff;font-weight:700;transform:scaleX(0.8871);">Employee name</div>
<svg class="r" style="left:358.90px;top:340.20px" width="4.6" height="7.4" viewBox="0 0 4.6 7.4"><path d="M0 3.4 L2.3 0 L4.6 3.4Z" fill="#c9cfe6"/><path d="M0 4 L2.3 7.4 L4.6 4Z" fill="#c9cfe6"/></svg>
<div class="t" style="left:261.00px;width:300px;text-align:center;transform-origin:50% 0;top:340px;font-size:8.176px;line-height:9px;color:#fff;font-weight:700;transform:scaleX(0.9266);">Department</div>
<svg class="r" style="left:448.90px;top:340.20px" width="4.6" height="7.4" viewBox="0 0 4.6 7.4"><path d="M0 3.4 L2.3 0 L4.6 3.4Z" fill="#c9cfe6"/><path d="M0 4 L2.3 7.4 L4.6 4Z" fill="#c9cfe6"/></svg>
<div class="t" style="left:333.25px;width:300px;text-align:center;transform-origin:50% 0;top:340px;font-size:8.176px;line-height:9px;color:#fff;font-weight:700;transform:scaleX(0.8666);">Checkin</div>
<svg class="r" style="left:503.40px;top:340.20px" width="4.6" height="7.4" viewBox="0 0 4.6 7.4"><path d="M0 3.4 L2.3 0 L4.6 3.4Z" fill="#c9cfe6"/><path d="M0 4 L2.3 7.4 L4.6 4Z" fill="#c9cfe6"/></svg>
<div class="t" style="left:392.75px;width:300px;text-align:center;transform-origin:50% 0;top:340px;font-size:8.176px;line-height:9px;color:#fff;font-weight:700;transform:scaleX(0.8878);">Checkout</div>
<svg class="r" style="left:567.90px;top:340.20px" width="4.6" height="7.4" viewBox="0 0 4.6 7.4"><path d="M0 3.4 L2.3 0 L4.6 3.4Z" fill="#c9cfe6"/><path d="M0 4 L2.3 7.4 L4.6 4Z" fill="#c9cfe6"/></svg>
<div class="t" style="left:461.15px;width:300px;text-align:center;transform-origin:50% 0;top:340px;font-size:8.176px;line-height:9px;color:#fff;font-weight:700;transform:scaleX(0.9084);">Worked Hours</div>
<svg class="r" style="left:640.20px;top:340.20px" width="4.6" height="7.4" viewBox="0 0 4.6 7.4"><path d="M0 3.4 L2.3 0 L4.6 3.4Z" fill="#c9cfe6"/><path d="M0 4 L2.3 7.4 L4.6 4Z" fill="#c9cfe6"/></svg>
<div class="t" style="left:524.65px;width:300px;text-align:center;transform-origin:50% 0;top:340px;font-size:8.176px;line-height:9px;color:#fff;font-weight:700;transform:scaleX(0.8910);">OverTime</div>
<svg class="r" style="left:694.90px;top:340.20px" width="4.6" height="7.4" viewBox="0 0 4.6 7.4"><path d="M0 3.4 L2.3 0 L4.6 3.4Z" fill="#c9cfe6"/><path d="M0 4 L2.3 7.4 L4.6 4Z" fill="#c9cfe6"/></svg>
<div class="t" style="left:591.00px;width:300px;text-align:center;transform-origin:50% 0;top:340px;font-size:8.176px;line-height:9px;color:#fff;font-weight:700;transform:scaleX(0.8889);">OverTime Status</div>
<svg class="r" style="left:772.90px;top:340.20px" width="4.6" height="7.4" viewBox="0 0 4.6 7.4"><path d="M0 3.4 L2.3 0 L4.6 3.4Z" fill="#c9cfe6"/><path d="M0 4 L2.3 7.4 L4.6 4Z" fill="#c9cfe6"/></svg>
<div class="t" style="left:665.00px;width:300px;text-align:center;transform-origin:50% 0;top:340px;font-size:8.176px;line-height:9px;color:#fff;font-weight:700;transform:scaleX(0.9267);">Working Unit</div>
<svg class="r" style="left:842.90px;top:340.20px" width="4.6" height="7.4" viewBox="0 0 4.6 7.4"><path d="M0 3.4 L2.3 0 L4.6 3.4Z" fill="#c9cfe6"/><path d="M0 4 L2.3 7.4 L4.6 4Z" fill="#c9cfe6"/></svg>
<div class="t" style="left:725.50px;width:300px;text-align:center;transform-origin:50% 0;top:340px;font-size:8.176px;line-height:9px;color:#fff;font-weight:700;transform:scaleX(0.9081);">Mistakes</div>
<svg class="r" style="left:893.90px;top:340.20px" width="4.6" height="7.4" viewBox="0 0 4.6 7.4"><path d="M0 3.4 L2.3 0 L4.6 3.4Z" fill="#c9cfe6"/><path d="M0 4 L2.3 7.4 L4.6 4Z" fill="#c9cfe6"/></svg>
<div class="t" style="left:772.00px;width:300px;text-align:center;transform-origin:50% 0;top:340px;font-size:8.176px;line-height:9px;color:#fff;font-weight:700;transform:scaleX(0.8782);">Status</div>
<svg class="r" style="left:935.90px;top:340.20px" width="4.6" height="7.4" viewBox="0 0 4.6 7.4"><path d="M0 3.4 L2.3 0 L4.6 3.4Z" fill="#c9cfe6"/><path d="M0 4 L2.3 7.4 L4.6 4Z" fill="#c9cfe6"/></svg>
<div class="t" style="left:821.20px;width:300px;text-align:center;transform-origin:50% 0;top:340px;font-size:8.176px;line-height:9px;color:#fff;font-weight:700;transform:scaleX(0.8906);">Action</div>
<svg class="r" style="left:992.30px;top:340.20px" width="4.6" height="7.4" viewBox="0 0 4.6 7.4"><path d="M0 3.4 L2.3 0 L4.6 3.4Z" fill="#c9cfe6"/><path d="M0 4 L2.3 7.4 L4.6 4Z" fill="#c9cfe6"/></svg>
<div class="r" style="left:195.00px;top:355.30px;width:804.40px;height:33.63px;background:#f9f9f9"></div>
<div class="r" style="left:195.00px;top:355.30px;width:29.40px;height:33.63px;background:#f1f1f1"></div>
<div class="r" style="left:456.00px;top:355.30px;width:191.30px;height:33.63px;background:#dc3545"></div>
<div class="r" style="left:195.00px;top:387.93px;width:804.40px;height:1.00px;background:rgba(222,226,230,0.8)"></div>
<div class="t" style="left:59.70px;width:300px;text-align:center;transform-origin:50% 0;top:367px;font-size:8.400px;line-height:10px;color:#212529;font-weight:400;transform:scaleX(0.9072);">1</div>
<div class="t" style="left:100.20px;width:300px;text-align:center;transform-origin:50% 0;top:367px;font-size:8.400px;line-height:10px;color:#212529;font-weight:400;transform:scaleX(0.9072);">2024-11-04</div>
<div class="t" style="left:171.00px;width:300px;text-align:center;transform-origin:50% 0;top:367px;font-size:8.400px;line-height:10px;color:#212529;font-weight:400;transform:scaleX(0.8877);">Muhammad Anas</div>
<div class="t" style="left:261.00px;width:300px;text-align:center;transform-origin:50% 0;top:367px;font-size:8.400px;line-height:10px;color:#212529;font-weight:400;transform:scaleX(0.8877);">Management</div>
<div class="t" style="left:333.25px;width:300px;text-align:center;transform-origin:50% 0;top:367px;font-size:8.400px;line-height:10px;color:#fff;font-weight:400;-webkit-text-stroke:0.05px #fff;transform:scaleX(0.8409);">10:10 (10:00)</div>
<div class="t" style="left:392.75px;width:300px;text-align:center;transform-origin:50% 0;top:367px;font-size:8.400px;line-height:10px;color:#fff;font-weight:400;-webkit-text-stroke:0.05px #fff;transform:scaleX(0.8850);">Working (22:00)</div>
<div class="t" style="left:461.15px;width:300px;text-align:center;transform-origin:50% 0;top:367px;font-size:8.400px;line-height:10px;color:#fff;font-weight:400;-webkit-text-stroke:0.05px #fff;transform:scaleX(0.8680);">0 (12)</div>
<div class="t" style="left:524.65px;width:300px;text-align:center;transform-origin:50% 0;top:367px;font-size:8.400px;line-height:10px;color:#212529;font-weight:400;transform:scaleX(0.9072);">0</div>
<div class="t" style="left:591.00px;width:300px;text-align:center;transform-origin:50% 0;top:367px;font-size:8.400px;line-height:10px;color:#212529;font-weight:400;transform:scaleX(0.9163);">Not Approved</div>
<div class="t" style="left:665.00px;width:300px;text-align:center;transform-origin:50% 0;top:367px;font-size:8.400px;line-height:10px;color:#212529;font-weight:400;transform:scaleX(0.9072);">0</div>
<div class="t" style="left:725.50px;width:300px;text-align:center;transform-origin:50% 0;top:367px;font-size:8.400px;line-height:10px;color:#212529;font-weight:400;transform:scaleX(0.9072);">0</div>
<div class="r" style="left:948.70px;top:362.10px;width:21.20px;height:20.20px;background:#ffc107;border-radius:3px"></div>
<div class="r" style="left:972.00px;top:362.10px;width:21.10px;height:20.20px;background:#198754;border-radius:3px"></div>
<svg class="r" style="left:954.80px;top:367.90px" width="8" height="8" viewBox="0 0 8 8"><path d="M0.6 7.4 L1 5.6 L5.6 1 L7 2.4 L2.4 7Z" fill="#111"/><path d="M6 0.6 L6.6 0 L8 1.4 L7.4 2Z" fill="#111"/></svg>
<svg class="r" style="left:978.50px;top:368.10px" width="8" height="8" viewBox="0 0 8 8"><circle cx="4" cy="4" r="3.1" fill="none" stroke="#fff" stroke-width="1.1"/><path d="M4.6 2.2 L4 4.2 L3.2 5" fill="none" stroke="#fff" stroke-width="0.8" opacity="0.8"/></svg>
<div class="r" style="left:195.00px;top:388.93px;width:804.40px;height:33.63px;background:#ffffff"></div>
<div class="r" style="left:195.00px;top:388.93px;width:29.40px;height:33.63px;background:#fafafa"></div>
<div class="r" style="left:456.00px;top:388.93px;width:191.30px;height:33.63px;background:#dc3545"></div>
<div class="r" style="left:195.00px;top:421.56px;width:804.40px;height:1.00px;background:rgba(222,226,230,0.8)"></div>
<div class="t" style="left:59.70px;width:300px;text-align:center;transform-origin:50% 0;top:401px;font-size:8.400px;line-height:10px;color:#212529;font-weight:400;transform:scaleX(0.9072);">2</div>
<div class="t" style="left:100.20px;width:300px;text-align:center;transform-origin:50% 0;top:401px;font-size:8.400px;line-height:10px;color:#212529;font-weight:400;transform:scaleX(0.9072);">2024-11-04</div>
<div class="t" style="left:171.00px;width:300px;text-align:center;transform-origin:50% 0;top:401px;font-size:8.400px;line-height:10px;color:#212529;font-weight:400;transform:scaleX(0.8877);">Mahfooz</div>
<div class="t" style="left:261.00px;width:300px;text-align:center;transform-origin:50% 0;top:401px;font-size:8.400px;line-height:10px;color:#212529;font-weight:400;transform:scaleX(0.8877);">CAD Designing</div>
<div class="t" style="left:333.25px;width:300px;text-align:center;transform-origin:50% 0;top:401px;font-size:8.400px;line-height:10px;color:#fff;font-weight:400;-webkit-text-stroke:0.05px #fff;transform:scaleX(0.8409);">10:39 (10:00)</div>
<div class="t" style="left:392.75px;width:300px;text-align:center;transform-origin:50% 0;top:401px;font-size:8.400px;line-height:10px;color:#fff;font-weight:400;-webkit-text-stroke:0.05px #fff;transform:scaleX(0.8850);">Working (22:00)</div>
<div class="t" style="left:461.15px;width:300px;text-align:center;transform-origin:50% 0;top:401px;font-size:8.400px;line-height:10px;color:#fff;font-weight:400;-webkit-text-stroke:0.05px #fff;transform:scaleX(0.8680);">0 (12)</div>
<div class="t" style="left:524.65px;width:300px;text-align:center;transform-origin:50% 0;top:401px;font-size:8.400px;line-height:10px;color:#212529;font-weight:400;transform:scaleX(0.9072);">0</div>
<div class="t" style="left:591.00px;width:300px;text-align:center;transform-origin:50% 0;top:401px;font-size:8.400px;line-height:10px;color:#212529;font-weight:400;transform:scaleX(0.9163);">Not Approved</div>
<div class="t" style="left:665.00px;width:300px;text-align:center;transform-origin:50% 0;top:401px;font-size:8.400px;line-height:10px;color:#212529;font-weight:400;transform:scaleX(0.9072);">0</div>
<div class="t" style="left:725.50px;width:300px;text-align:center;transform-origin:50% 0;top:401px;font-size:8.400px;line-height:10px;color:#212529;font-weight:400;transform:scaleX(0.9072);">0</div>
<div class="r" style="left:948.70px;top:395.73px;width:21.20px;height:20.20px;background:#ffc107;border-radius:3px"></div>
<div class="r" style="left:972.00px;top:395.73px;width:21.10px;height:20.20px;background:#198754;border-radius:3px"></div>
<svg class="r" style="left:954.80px;top:401.53px" width="8" height="8" viewBox="0 0 8 8"><path d="M0.6 7.4 L1 5.6 L5.6 1 L7 2.4 L2.4 7Z" fill="#111"/><path d="M6 0.6 L6.6 0 L8 1.4 L7.4 2Z" fill="#111"/></svg>
<svg class="r" style="left:978.50px;top:401.73px" width="8" height="8" viewBox="0 0 8 8"><circle cx="4" cy="4" r="3.1" fill="none" stroke="#fff" stroke-width="1.1"/><path d="M4.6 2.2 L4 4.2 L3.2 5" fill="none" stroke="#fff" stroke-width="0.8" opacity="0.8"/></svg>
<div class="r" style="left:195.00px;top:422.56px;width:804.40px;height:33.63px;background:#f9f9f9"></div>
<div class="r" style="left:195.00px;top:422.56px;width:29.40px;height:33.63px;background:#f1f1f1"></div>
<div class="r" style="left:456.00px;top:422.56px;width:191.30px;height:33.63px;background:#dc3545"></div>
<div class="r" style="left:195.00px;top:455.19px;width:804.40px;height:1.00px;background:rgba(222,226,230,0.8)"></div>
<div class="t" style="left:59.70px;width:300px;text-align:center;transform-origin:50% 0;top:434px;font-size:8.400px;line-height:10px;color:#212529;font-weight:400;transform:scaleX(0.9072);">3</div>
<div class="t" style="left:100.20px;width:300px;text-align:center;transform-origin:50% 0;top:434px;font-size:8.400px;line-height:10px;color:#212529;font-weight:400;transform:scaleX(0.9072);">2024-11-04</div>
<div class="t" style="left:171.00px;width:300px;text-align:center;transform-origin:50% 0;top:434px;font-size:8.400px;line-height:10px;color:#212529;font-weight:400;transform:scaleX(0.8877);">Ameer Ali</div>
<div class="t" style="left:261.00px;width:300px;text-align:center;transform-origin:50% 0;top:434px;font-size:8.400px;line-height:10px;color:#212529;font-weight:400;transform:scaleX(0.8877);">Management</div>
<div class="t" style="left:333.25px;width:300px;text-align:center;transform-origin:50% 0;top:434px;font-size:8.400px;line-height:10px;color:#fff;font-weight:400;-webkit-text-stroke:0.05px #fff;transform:scaleX(0.8409);">10:11 (08:00)</div>
<div class="t" style="left:392.75px;width:300px;text-align:center;transform-origin:50% 0;top:434px;font-size:8.400px;line-height:10px;color:#fff;font-weight:400;-webkit-text-stroke:0.05px #fff;transform:scaleX(0.8850);">Working (16:00)</div>
<div class="t" style="left:461.15px;width:300px;text-align:center;transform-origin:50% 0;top:434px;font-size:8.400px;line-height:10px;color:#fff;font-weight:400;-webkit-text-stroke:0.05px #fff;transform:scaleX(0.8680);">0 (8)</div>
<div class="t" style="left:524.65px;width:300px;text-align:center;transform-origin:50% 0;top:434px;font-size:8.400px;line-height:10px;color:#212529;font-weight:400;transform:scaleX(0.9072);">0</div>
<div class="t" style="left:591.00px;width:300px;text-align:center;transform-origin:50% 0;top:434px;font-size:8.400px;line-height:10px;color:#212529;font-weight:400;transform:scaleX(0.9163);">Not Approved</div>
<div class="t" style="left:665.00px;width:300px;text-align:center;transform-origin:50% 0;top:434px;font-size:8.400px;line-height:10px;color:#212529;font-weight:400;transform:scaleX(0.9072);">0</div>
<div class="t" style="left:725.50px;width:300px;text-align:center;transform-origin:50% 0;top:434px;font-size:8.400px;line-height:10px;color:#212529;font-weight:400;transform:scaleX(0.9072);">0</div>
<div class="r" style="left:948.70px;top:429.36px;width:21.20px;height:20.20px;background:#ffc107;border-radius:3px"></div>
<div class="r" style="left:972.00px;top:429.36px;width:21.10px;height:20.20px;background:#198754;border-radius:3px"></div>
<svg class="r" style="left:954.80px;top:435.16px" width="8" height="8" viewBox="0 0 8 8"><path d="M0.6 7.4 L1 5.6 L5.6 1 L7 2.4 L2.4 7Z" fill="#111"/><path d="M6 0.6 L6.6 0 L8 1.4 L7.4 2Z" fill="#111"/></svg>
<svg class="r" style="left:978.50px;top:435.36px" width="8" height="8" viewBox="0 0 8 8"><circle cx="4" cy="4" r="3.1" fill="none" stroke="#fff" stroke-width="1.1"/><path d="M4.6 2.2 L4 4.2 L3.2 5" fill="none" stroke="#fff" stroke-width="0.8" opacity="0.8"/></svg>
<div class="r" style="left:195.00px;top:456.19px;width:804.40px;height:33.63px;background:#ffffff"></div>
<div class="r" style="left:195.00px;top:456.19px;width:29.40px;height:33.63px;background:#fafafa"></div>
<div class="r" style="left:456.00px;top:456.19px;width:191.30px;height:33.63px;background:#dc3545"></div>
<div class="r" style="left:195.00px;top:488.82px;width:804.40px;height:1.00px;background:rgba(222,226,230,0.8)"></div>
<div class="t" style="left:59.70px;width:300px;text-align:center;transform-origin:50% 0;top:468px;font-size:8.400px;line-height:10px;color:#212529;font-weight:400;transform:scaleX(0.9072);">4</div>
<div class="t" style="left:100.20px;width:300px;text-align:center;transform-origin:50% 0;top:468px;font-size:8.400px;line-height:10px;color:#212529;font-weight:400;transform:scaleX(0.9072);">2024-11-04</div>
<div class="t" style="left:171.00px;width:300px;text-align:center;transform-origin:50% 0;top:468px;font-size:8.400px;line-height:10px;color:#212529;font-weight:400;transform:scaleX(0.8877);">Noor Samand</div>
<div class="t" style="left:261.00px;width:300px;text-align:center;transform-origin:50% 0;top:468px;font-size:8.400px;line-height:10px;color:#212529;font-weight:400;transform:scaleX(0.8877);">Data Entry</div>
<div class="t" style="left:333.25px;width:300px;text-align:center;transform-origin:50% 0;top:468px;font-size:8.400px;line-height:10px;color:#fff;font-weight:400;-webkit-text-stroke:0.05px #fff;transform:scaleX(0.8409);">10:03 (10:00)</div>
<div class="t" style="left:392.75px;width:300px;text-align:center;transform-origin:50% 0;top:468px;font-size:8.400px;line-height:10px;color:#fff;font-weight:400;-webkit-text-stroke:0.05px #fff;transform:scaleX(0.8850);">Working (22:00)</div>
<div class="t" style="left:461.15px;width:300px;text-align:center;transform-origin:50% 0;top:468px;font-size:8.400px;line-height:10px;color:#fff;font-weight:400;-webkit-text-stroke:0.05px #fff;transform:scaleX(0.8680);">0 (12)</div>
<div class="t" style="left:524.65px;width:300px;text-align:center;transform-origin:50% 0;top:468px;font-size:8.400px;line-height:10px;color:#212529;font-weight:400;transform:scaleX(0.9072);">0</div>
<div class="t" style="left:591.00px;width:300px;text-align:center;transform-origin:50% 0;top:468px;font-size:8.400px;line-height:10px;color:#212529;font-weight:400;transform:scaleX(0.9163);">Not Approved</div>
<div class="t" style="left:665.00px;width:300px;text-align:center;transform-origin:50% 0;top:468px;font-size:8.400px;line-height:10px;color:#212529;font-weight:400;transform:scaleX(0.9072);">0</div>
<div class="t" style="left:725.50px;width:300px;text-align:center;transform-origin:50% 0;top:468px;font-size:8.400px;line-height:10px;color:#212529;font-weight:400;transform:scaleX(0.9072);">0</div>
<div class="r" style="left:948.70px;top:462.99px;width:21.20px;height:20.20px;background:#ffc107;border-radius:3px"></div>
<div class="r" style="left:972.00px;top:462.99px;width:21.10px;height:20.20px;background:#198754;border-radius:3px"></div>
<svg class="r" style="left:954.80px;top:468.79px" width="8" height="8" viewBox="0 0 8 8"><path d="M0.6 7.4 L1 5.6 L5.6 1 L7 2.4 L2.4 7Z" fill="#111"/><path d="M6 0.6 L6.6 0 L8 1.4 L7.4 2Z" fill="#111"/></svg>
<svg class="r" style="left:978.50px;top:468.99px" width="8" height="8" viewBox="0 0 8 8"><circle cx="4" cy="4" r="3.1" fill="none" stroke="#fff" stroke-width="1.1"/><path d="M4.6 2.2 L4 4.2 L3.2 5" fill="none" stroke="#fff" stroke-width="0.8" opacity="0.8"/></svg>
<div class="r" style="left:195.00px;top:489.82px;width:804.40px;height:33.63px;background:#f9f9f9"></div>
<div class="r" style="left:195.00px;top:489.82px;width:29.40px;height:33.63px;background:#f1f1f1"></div>
<div class="r" style="left:456.00px;top:489.82px;width:191.30px;height:33.63px;background:#dc3545"></div>
<div class="r" style="left:195.00px;top:522.45px;width:804.40px;height:1.00px;background:rgba(222,226,230,0.8)"></div>
<div class="t" style="left:59.70px;width:300px;text-align:center;transform-origin:50% 0;top:501px;font-size:8.400px;line-height:10px;color:#212529;font-weight:400;transform:scaleX(0.9072);">5</div>
<div class="t" style="left:100.20px;width:300px;text-align:center;transform-origin:50% 0;top:501px;font-size:8.400px;line-height:10px;color:#212529;font-weight:400;transform:scaleX(0.9072);">2024-11-04</div>
<div class="t" style="left:171.00px;width:300px;text-align:center;transform-origin:50% 0;top:501px;font-size:8.400px;line-height:10px;color:#212529;font-weight:400;transform:scaleX(0.8877);">Abdul Waheed</div>
<div class="t" style="left:261.00px;width:300px;text-align:center;transform-origin:50% 0;top:501px;font-size:8.400px;line-height:10px;color:#212529;font-weight:400;transform:scaleX(0.8877);">Maintenance</div>
<div class="t" style="left:333.25px;width:300px;text-align:center;transform-origin:50% 0;top:501px;font-size:8.400px;line-height:10px;color:#fff;font-weight:400;-webkit-text-stroke:0.05px #fff;transform:scaleX(0.8409);">09:38 (06:30)</div>
<div class="t" style="left:392.75px;width:300px;text-align:center;transform-origin:50% 0;top:501px;font-size:8.400px;line-height:10px;color:#fff;font-weight:400;-webkit-text-stroke:0.05px #fff;transform:scaleX(0.8850);">Working (14:00)</div>
<div class="t" style="left:461.15px;width:300px;text-align:center;transform-origin:50% 0;top:501px;font-size:8.400px;line-height:10px;color:#fff;font-weight:400;-webkit-text-stroke:0.05px #fff;transform:scaleX(0.8680);">0 (7)</div>
<div class="t" style="left:524.65px;width:300px;text-align:center;transform-origin:50% 0;top:501px;font-size:8.400px;line-height:10px;color:#212529;font-weight:400;transform:scaleX(0.9072);">0</div>
<div class="t" style="left:591.00px;width:300px;text-align:center;transform-origin:50% 0;top:501px;font-size:8.400px;line-height:10px;color:#212529;font-weight:400;transform:scaleX(0.9163);">Not Approved</div>
<div class="t" style="left:665.00px;width:300px;text-align:center;transform-origin:50% 0;top:501px;font-size:8.400px;line-height:10px;color:#212529;font-weight:400;transform:scaleX(0.9072);">0</div>
<div class="t" style="left:725.50px;width:300px;text-align:center;transform-origin:50% 0;top:501px;font-size:8.400px;line-height:10px;color:#212529;font-weight:400;transform:scaleX(0.9072);">0</div>
<div class="r" style="left:948.70px;top:496.62px;width:21.20px;height:20.20px;background:#ffc107;border-radius:3px"></div>
<div class="r" style="left:972.00px;top:496.62px;width:21.10px;height:20.20px;background:#198754;border-radius:3px"></div>
<svg class="r" style="left:954.80px;top:502.42px" width="8" height="8" viewBox="0 0 8 8"><path d="M0.6 7.4 L1 5.6 L5.6 1 L7 2.4 L2.4 7Z" fill="#111"/><path d="M6 0.6 L6.6 0 L8 1.4 L7.4 2Z" fill="#111"/></svg>
<svg class="r" style="left:978.50px;top:502.62px" width="8" height="8" viewBox="0 0 8 8"><circle cx="4" cy="4" r="3.1" fill="none" stroke="#fff" stroke-width="1.1"/><path d="M4.6 2.2 L4 4.2 L3.2 5" fill="none" stroke="#fff" stroke-width="0.8" opacity="0.8"/></svg>
<div class="r" style="left:195.00px;top:523.45px;width:804.40px;height:33.63px;background:#ffffff"></div>
<div class="r" style="left:195.00px;top:523.45px;width:29.40px;height:33.63px;background:#fafafa"></div>
<div class="r" style="left:456.00px;top:523.45px;width:191.30px;height:33.63px;background:#dc3545"></div>
<div class="r" style="left:195.00px;top:556.08px;width:804.40px;height:1.00px;background:rgba(222,226,230,0.8)"></div>
<div class="t" style="left:59.70px;width:300px;text-align:center;transform-origin:50% 0;top:535px;font-size:8.400px;line-height:10px;color:#212529;font-weight:400;transform:scaleX(0.9072);">6</div>
<div class="t" style="left:100.20px;width:300px;text-align:center;transform-origin:50% 0;top:535px;font-size:8.400px;line-height:10px;color:#212529;font-weight:400;transform:scaleX(0.9072);">2024-11-04</div>
<div class="t" style="left:171.00px;width:300px;text-align:center;transform-origin:50% 0;top:535px;font-size:8.400px;line-height:10px;color:#212529;font-weight:400;transform:scaleX(0.8877);">Naila Nazeer</div>
<div class="t" style="left:261.00px;width:300px;text-align:center;transform-origin:50% 0;top:535px;font-size:8.400px;line-height:10px;color:#212529;font-weight:400;transform:scaleX(0.8877);">Milling &amp; Printing</div>
<div class="t" style="left:333.25px;width:300px;text-align:center;transform-origin:50% 0;top:535px;font-size:8.400px;line-height:10px;color:#fff;font-weight:400;-webkit-text-stroke:0.05px #fff;transform:scaleX(0.8409);">09:16 (09:00)</div>
<div class="t" style="left:392.75px;width:300px;text-align:center;transform-origin:50% 0;top:535px;font-size:8.400px;line-height:10px;color:#fff;font-weight:400;-webkit-text-stroke:0.05px #fff;transform:scaleX(0.8850);">Working (17:00)</div>
<div class="t" style="left:461.15px;width:300px;text-align:center;transform-origin:50% 0;top:535px;font-size:8.400px;line-height:10px;color:#fff;font-weight:400;-webkit-text-stroke:0.05px #fff;transform:scaleX(0.8680);">0 (8)</div>
<div class="t" style="left:524.65px;width:300px;text-align:center;transform-origin:50% 0;top:535px;font-size:8.400px;line-height:10px;color:#212529;font-weight:400;transform:scaleX(0.9072);">0</div>
<div class="t" style="left:591.00px;width:300px;text-align:center;transform-origin:50% 0;top:535px;font-size:8.400px;line-height:10px;color:#212529;font-weight:400;transform:scaleX(0.9163);">Not Approved</div>
<div class="t" style="left:665.00px;width:300px;text-align:center;transform-origin:50% 0;top:535px;font-size:8.400px;line-height:10px;color:#212529;font-weight:400;transform:scaleX(0.9072);">0</div>
<div class="t" style="left:725.50px;width:300px;text-align:center;transform-origin:50% 0;top:535px;font-size:8.400px;line-height:10px;color:#212529;font-weight:400;transform:scaleX(0.9072);">0</div>
<div class="r" style="left:948.70px;top:530.25px;width:21.20px;height:20.20px;background:#ffc107;border-radius:3px"></div>
<div class="r" style="left:972.00px;top:530.25px;width:21.10px;height:20.20px;background:#198754;border-radius:3px"></div>
<svg class="r" style="left:954.80px;top:536.05px" width="8" height="8" viewBox="0 0 8 8"><path d="M0.6 7.4 L1 5.6 L5.6 1 L7 2.4 L2.4 7Z" fill="#111"/><path d="M6 0.6 L6.6 0 L8 1.4 L7.4 2Z" fill="#111"/></svg>
<svg class="r" style="left:978.50px;top:536.25px" width="8" height="8" viewBox="0 0 8 8"><circle cx="4" cy="4" r="3.1" fill="none" stroke="#fff" stroke-width="1.1"/><path d="M4.6 2.2 L4 4.2 L3.2 5" fill="none" stroke="#fff" stroke-width="0.8" opacity="0.8"/></svg>
<div class="r" style="left:195.00px;top:557.08px;width:804.40px;height:33.63px;background:#f9f9f9"></div>
<div class="r" style="left:195.00px;top:557.08px;width:29.40px;height:33.63px;background:#f1f1f1"></div>
<div class="r" style="left:456.00px;top:557.08px;width:191.30px;height:33.63px;background:#dc3545"></div>
<div class="r" style="left:195.00px;top:589.71px;width:804.40px;height:1.00px;background:rgba(222,226,230,0.8)"></div>
<div class="t" style="left:59.70px;width:300px;text-align:center;transform-origin:50% 0;top:568px;font-size:8.400px;line-height:10px;color:#212529;font-weight:400;transform:scaleX(0.9072);">7</div>
<div class="t" style="left:100.20px;width:300px;text-align:center;transform-origin:50% 0;top:568px;font-size:8.400px;line-height:10px;color:#212529;font-weight:400;transform:scaleX(0.9072);">2024-11-04</div>
<div class="t" style="left:171.00px;width:300px;text-align:center;transform-origin:50% 0;top:568px;font-size:8.400px;line-height:10px;color:#212529;font-weight:400;transform:scaleX(0.8877);">Kashif Mehmod</div>
<div class="t" style="left:261.00px;width:300px;text-align:center;transform-origin:50% 0;top:568px;font-size:8.400px;line-height:10px;color:#212529;font-weight:400;transform:scaleX(0.8877);">Maintenance</div>
<div class="t" style="left:333.25px;width:300px;text-align:center;transform-origin:50% 0;top:568px;font-size:8.400px;line-height:10px;color:#fff;font-weight:400;-webkit-text-stroke:0.05px #fff;transform:scaleX(0.8409);">09:16 (09:00)</div>
<div class="t" style="left:392.75px;width:300px;text-align:center;transform-origin:50% 0;top:568px;font-size:8.400px;line-height:10px;color:#fff;font-weight:400;-webkit-text-stroke:0.05px #fff;transform:scaleX(0.8850);">Working (17:00)</div>
<div class="t" style="left:461.15px;width:300px;text-align:center;transform-origin:50% 0;top:568px;font-size:8.400px;line-height:10px;color:#fff;font-weight:400;-webkit-text-stroke:0.05px #fff;transform:scaleX(0.8680);">0 (8)</div>
<div class="t" style="left:524.65px;width:300px;text-align:center;transform-origin:50% 0;top:568px;font-size:8.400px;line-height:10px;color:#212529;font-weight:400;transform:scaleX(0.9072);">0</div>
<div class="t" style="left:591.00px;width:300px;text-align:center;transform-origin:50% 0;top:568px;font-size:8.400px;line-height:10px;color:#212529;font-weight:400;transform:scaleX(0.9163);">Not Approved</div>
<div class="t" style="left:665.00px;width:300px;text-align:center;transform-origin:50% 0;top:568px;font-size:8.400px;line-height:10px;color:#212529;font-weight:400;transform:scaleX(0.9072);">0</div>
<div class="t" style="left:725.50px;width:300px;text-align:center;transform-origin:50% 0;top:568px;font-size:8.400px;line-height:10px;color:#212529;font-weight:400;transform:scaleX(0.9072);">0</div>
<div class="r" style="left:948.70px;top:563.88px;width:21.20px;height:20.20px;background:#ffc107;border-radius:3px"></div>
<div class="r" style="left:972.00px;top:563.88px;width:21.10px;height:20.20px;background:#198754;border-radius:3px"></div>
<svg class="r" style="left:954.80px;top:569.68px" width="8" height="8" viewBox="0 0 8 8"><path d="M0.6 7.4 L1 5.6 L5.6 1 L7 2.4 L2.4 7Z" fill="#111"/><path d="M6 0.6 L6.6 0 L8 1.4 L7.4 2Z" fill="#111"/></svg>
<svg class="r" style="left:978.50px;top:569.88px" width="8" height="8" viewBox="0 0 8 8"><circle cx="4" cy="4" r="3.1" fill="none" stroke="#fff" stroke-width="1.1"/><path d="M4.6 2.2 L4 4.2 L3.2 5" fill="none" stroke="#fff" stroke-width="0.8" opacity="0.8"/></svg>
<div class="r" style="left:195.00px;top:590.71px;width:804.40px;height:33.63px;background:#ffffff"></div>
<div class="r" style="left:195.00px;top:590.71px;width:29.40px;height:33.63px;background:#fafafa"></div>
<div class="r" style="left:456.00px;top:590.71px;width:191.30px;height:33.63px;background:#dc3545"></div>
<div class="r" style="left:195.00px;top:623.34px;width:804.40px;height:1.00px;background:rgba(222,226,230,0.8)"></div>
<div class="t" style="left:59.70px;width:300px;text-align:center;transform-origin:50% 0;top:602px;font-size:8.400px;line-height:10px;color:#212529;font-weight:400;transform:scaleX(0.9072);">8</div>
<div class="t" style="left:100.20px;width:300px;text-align:center;transform-origin:50% 0;top:602px;font-size:8.400px;line-height:10px;color:#212529;font-weight:400;transform:scaleX(0.9072);">2024-11-04</div>
<div class="t" style="left:171.00px;width:300px;text-align:center;transform-origin:50% 0;top:602px;font-size:8.400px;line-height:10px;color:#212529;font-weight:400;transform:scaleX(0.8877);">Abuzar Shafiq</div>
<div class="t" style="left:261.00px;width:300px;text-align:center;transform-origin:50% 0;top:602px;font-size:8.400px;line-height:10px;color:#212529;font-weight:400;transform:scaleX(0.8877);">Maintenance</div>
<div class="t" style="left:333.25px;width:300px;text-align:center;transform-origin:50% 0;top:602px;font-size:8.400px;line-height:10px;color:#fff;font-weight:400;-webkit-text-stroke:0.05px #fff;transform:scaleX(0.8409);">09:03 (06:30)</div>
<div class="t" style="left:392.75px;width:300px;text-align:center;transform-origin:50% 0;top:602px;font-size:8.400px;line-height:10px;color:#fff;font-weight:400;-webkit-text-stroke:0.05px #fff;transform:scaleX(0.8850);">Working (14:00)</div>
<div class="t" style="left:461.15px;width:300px;text-align:center;transform-origin:50% 0;top:602px;font-size:8.400px;line-height:10px;color:#fff;font-weight:400;-webkit-text-stroke:0.05px #fff;transform:scaleX(0.8680);">0 (7)</div>
<div class="t" style="left:524.65px;width:300px;text-align:center;transform-origin:50% 0;top:602px;font-size:8.400px;line-height:10px;color:#212529;font-weight:400;transform:scaleX(0.9072);">0</div>
<div class="t" style="left:591.00px;width:300px;text-align:center;transform-origin:50% 0;top:602px;font-size:8.400px;line-height:10px;color:#212529;font-weight:400;transform:scaleX(0.9163);">Not Approved</div>
<div class="t" style="left:665.00px;width:300px;text-align:center;transform-origin:50% 0;top:602px;font-size:8.400px;line-height:10px;color:#212529;font-weight:400;transform:scaleX(0.9072);">0</div>
<div class="t" style="left:725.50px;width:300px;text-align:center;transform-origin:50% 0;top:602px;font-size:8.400px;line-height:10px;color:#212529;font-weight:400;transform:scaleX(0.9072);">0</div>
<div class="r" style="left:948.70px;top:597.51px;width:21.20px;height:20.20px;background:#ffc107;border-radius:3px"></div>
<div class="r" style="left:972.00px;top:597.51px;width:21.10px;height:20.20px;background:#198754;border-radius:3px"></div>
<svg class="r" style="left:954.80px;top:603.31px" width="8" height="8" viewBox="0 0 8 8"><path d="M0.6 7.4 L1 5.6 L5.6 1 L7 2.4 L2.4 7Z" fill="#111"/><path d="M6 0.6 L6.6 0 L8 1.4 L7.4 2Z" fill="#111"/></svg>
<svg class="r" style="left:978.50px;top:603.51px" width="8" height="8" viewBox="0 0 8 8"><circle cx="4" cy="4" r="3.1" fill="none" stroke="#fff" stroke-width="1.1"/><path d="M4.6 2.2 L4 4.2 L3.2 5" fill="none" stroke="#fff" stroke-width="0.8" opacity="0.8"/></svg>
<div class="r" style="left:195.00px;top:624.34px;width:804.40px;height:33.63px;background:#f9f9f9"></div>
<div class="r" style="left:195.00px;top:624.34px;width:29.40px;height:33.63px;background:#f1f1f1"></div>
<div class="r" style="left:456.00px;top:624.34px;width:191.30px;height:33.63px;background:#dc3545"></div>
<div class="r" style="left:195.00px;top:656.97px;width:804.40px;height:1.00px;background:rgba(222,226,230,0.8)"></div>
<div class="t" style="left:59.70px;width:300px;text-align:center;transform-origin:50% 0;top:635px;font-size:8.400px;line-height:10px;color:#212529;font-weight:400;transform:scaleX(0.9072);">9</div>
<div class="t" style="left:100.20px;width:300px;text-align:center;transform-origin:50% 0;top:635px;font-size:8.400px;line-height:10px;color:#212529;font-weight:400;transform:scaleX(0.9072);">2024-11-04</div>
<div class="t" style="left:171.00px;width:300px;text-align:center;transform-origin:50% 0;top:635px;font-size:8.400px;line-height:10px;color:#212529;font-weight:400;transform:scaleX(0.8877);">Hafiz Ayub</div>
<div class="t" style="left:261.00px;width:300px;text-align:center;transform-origin:50% 0;top:635px;font-size:8.400px;line-height:10px;color:#212529;font-weight:400;transform:scaleX(0.8877);">Human Resource</div>
<div class="t" style="left:333.25px;width:300px;text-align:center;transform-origin:50% 0;top:635px;font-size:8.400px;line-height:10px;color:#fff;font-weight:400;-webkit-text-stroke:0.05px #fff;transform:scaleX(0.8409);">08:14 (08:00)</div>
<div class="t" style="left:392.75px;width:300px;text-align:center;transform-origin:50% 0;top:635px;font-size:8.400px;line-height:10px;color:#fff;font-weight:400;-webkit-text-stroke:0.05px #fff;transform:scaleX(0.8850);">Working (20:00)</div>
<div class="t" style="left:461.15px;width:300px;text-align:center;transform-origin:50% 0;top:635px;font-size:8.400px;line-height:10px;color:#fff;font-weight:400;-webkit-text-stroke:0.05px #fff;transform:scaleX(0.8680);">0 (12)</div>
<div class="t" style="left:524.65px;width:300px;text-align:center;transform-origin:50% 0;top:635px;font-size:8.400px;line-height:10px;color:#212529;font-weight:400;transform:scaleX(0.9072);">0</div>
<div class="t" style="left:591.00px;width:300px;text-align:center;transform-origin:50% 0;top:635px;font-size:8.400px;line-height:10px;color:#212529;font-weight:400;transform:scaleX(0.9163);">Not Approved</div>
<div class="t" style="left:665.00px;width:300px;text-align:center;transform-origin:50% 0;top:635px;font-size:8.400px;line-height:10px;color:#212529;font-weight:400;transform:scaleX(0.9072);">0</div>
<div class="t" style="left:725.50px;width:300px;text-align:center;transform-origin:50% 0;top:635px;font-size:8.400px;line-height:10px;color:#212529;font-weight:400;transform:scaleX(0.9072);">0</div>
<div class="r" style="left:948.70px;top:631.14px;width:21.20px;height:20.20px;background:#ffc107;border-radius:3px"></div>
<div class="r" style="left:972.00px;top:631.14px;width:21.10px;height:20.20px;background:#198754;border-radius:3px"></div>
<svg class="r" style="left:954.80px;top:636.94px" width="8" height="8" viewBox="0 0 8 8"><path d="M0.6 7.4 L1 5.6 L5.6 1 L7 2.4 L2.4 7Z" fill="#111"/><path d="M6 0.6 L6.6 0 L8 1.4 L7.4 2Z" fill="#111"/></svg>
<svg class="r" style="left:978.50px;top:637.14px" width="8" height="8" viewBox="0 0 8 8"><circle cx="4" cy="4" r="3.1" fill="none" stroke="#fff" stroke-width="1.1"/><path d="M4.6 2.2 L4 4.2 L3.2 5" fill="none" stroke="#fff" stroke-width="0.8" opacity="0.8"/></svg>
<div class="r" style="left:195.00px;top:657.97px;width:804.40px;height:33.63px;background:#ffffff"></div>
<div class="r" style="left:195.00px;top:657.97px;width:29.40px;height:33.63px;background:#fafafa"></div>
<div class="r" style="left:456.00px;top:657.97px;width:191.30px;height:33.63px;background:#dc3545"></div>
<div class="r" style="left:456.00px;top:657.97px;width:54.50px;height:33.63px;background:#28a745"></div>
<div class="r" style="left:195.00px;top:690.60px;width:804.40px;height:1.00px;background:rgba(222,226,230,0.8)"></div>
<div class="t" style="left:59.70px;width:300px;text-align:center;transform-origin:50% 0;top:669px;font-size:8.400px;line-height:10px;color:#212529;font-weight:400;transform:scaleX(0.9072);">10</div>
<div class="t" style="left:100.20px;width:300px;text-align:center;transform-origin:50% 0;top:669px;font-size:8.400px;line-height:10px;color:#212529;font-weight:400;transform:scaleX(0.9072);">2024-11-04</div>
<div class="t" style="left:171.00px;width:300px;text-align:center;transform-origin:50% 0;top:669px;font-size:8.400px;line-height:10px;color:#212529;font-weight:400;transform:scaleX(0.8877);">Ghulam Abbas</div>
<div class="t" style="left:261.00px;width:300px;text-align:center;transform-origin:50% 0;top:669px;font-size:8.400px;line-height:10px;color:#212529;font-weight:400;transform:scaleX(0.8877);">Milling &amp; Printing</div>
<div class="t" style="left:333.25px;width:300px;text-align:center;transform-origin:50% 0;top:669px;font-size:8.400px;line-height:10px;color:#fff;font-weight:400;-webkit-text-stroke:0.05px #fff;transform:scaleX(0.8409);">07:45 (10:00)</div>
<div class="t" style="left:392.75px;width:300px;text-align:center;transform-origin:50% 0;top:669px;font-size:8.400px;line-height:10px;color:#fff;font-weight:400;-webkit-text-stroke:0.05px #fff;transform:scaleX(0.8850);">Working (22:00)</div>
<div class="t" style="left:461.15px;width:300px;text-align:center;transform-origin:50% 0;top:669px;font-size:8.400px;line-height:10px;color:#fff;font-weight:400;-webkit-text-stroke:0.05px #fff;transform:scaleX(0.8680);">0 (12)</div>
<div class="t" style="left:524.65px;width:300px;text-align:center;transform-origin:50% 0;top:669px;font-size:8.400px;line-height:10px;color:#212529;font-weight:400;transform:scaleX(0.9072);">0</div>
<div class="t" style="left:591.00px;width:300px;text-align:center;transform-origin:50% 0;top:669px;font-size:8.400px;line-height:10px;color:#212529;font-weight:400;transform:scaleX(0.9163);">Not Approved</div>
<div class="t" style="left:665.00px;width:300px;text-align:center;transform-origin:50% 0;top:669px;font-size:8.400px;line-height:10px;color:#212529;font-weight:400;transform:scaleX(0.9072);">0</div>
<div class="t" style="left:725.50px;width:300px;text-align:center;transform-origin:50% 0;top:669px;font-size:8.400px;line-height:10px;color:#212529;font-weight:400;transform:scaleX(0.9072);">0</div>
<div class="r" style="left:948.70px;top:664.77px;width:21.20px;height:20.20px;background:#ffc107;border-radius:3px"></div>
<div class="r" style="left:972.00px;top:664.77px;width:21.10px;height:20.20px;background:#198754;border-radius:3px"></div>
<svg class="r" style="left:954.80px;top:670.57px" width="8" height="8" viewBox="0 0 8 8"><path d="M0.6 7.4 L1 5.6 L5.6 1 L7 2.4 L2.4 7Z" fill="#111"/><path d="M6 0.6 L6.6 0 L8 1.4 L7.4 2Z" fill="#111"/></svg>
<svg class="r" style="left:978.50px;top:670.77px" width="8" height="8" viewBox="0 0 8 8"><circle cx="4" cy="4" r="3.1" fill="none" stroke="#fff" stroke-width="1.1"/><path d="M4.6 2.2 L4 4.2 L3.2 5" fill="none" stroke="#fff" stroke-width="0.8" opacity="0.8"/></svg>
<div class="r" style="left:195.00px;top:691.60px;width:804.40px;height:33.63px;background:#f9f9f9"></div>
<div class="r" style="left:195.00px;top:691.60px;width:29.40px;height:33.63px;background:#f1f1f1"></div>
<div class="r" style="left:456.00px;top:691.60px;width:191.30px;height:33.63px;background:#dc3545"></div>
<div class="r" style="left:456.00px;top:691.60px;width:54.50px;height:33.63px;background:#28a745"></div>
<div class="r" style="left:195.00px;top:724.23px;width:804.40px;height:1.00px;background:rgba(222,226,230,0.8)"></div>
<div class="t" style="left:59.70px;width:300px;text-align:center;transform-origin:50% 0;top:702px;font-size:8.400px;line-height:10px;color:#212529;font-weight:400;transform:scaleX(0.9072);">11</div>
<div class="t" style="left:100.20px;width:300px;text-align:center;transform-origin:50% 0;top:702px;font-size:8.400px;line-height:10px;color:#212529;font-weight:400;transform:scaleX(0.9072);">2024-11-04</div>
<div class="t" style="left:171.00px;width:300px;text-align:center;transform-origin:50% 0;top:702px;font-size:8.400px;line-height:10px;color:#212529;font-weight:400;transform:scaleX(0.8877);">Hira Zeeshan Ali</div>
<div class="t" style="left:261.00px;width:300px;text-align:center;transform-origin:50% 0;top:702px;font-size:8.400px;line-height:10px;color:#212529;font-weight:400;transform:scaleX(0.8877);">Hira Tech</div>
<div class="t" style="left:333.25px;width:300px;text-align:center;transform-origin:50% 0;top:702px;font-size:8.400px;line-height:10px;color:#fff;font-weight:400;-webkit-text-stroke:0.05px #fff;transform:scaleX(0.8409);">07:44 (19:30)</div>
<div class="t" style="left:392.75px;width:300px;text-align:center;transform-origin:50% 0;top:702px;font-size:8.400px;line-height:10px;color:#fff;font-weight:400;-webkit-text-stroke:0.05px #fff;transform:scaleX(0.8850);">Working (15:30)</div>
<div class="t" style="left:461.15px;width:300px;text-align:center;transform-origin:50% 0;top:702px;font-size:8.400px;line-height:10px;color:#fff;font-weight:400;-webkit-text-stroke:0.05px #fff;transform:scaleX(0.8680);">0 (20)</div>
<div class="t" style="left:524.65px;width:300px;text-align:center;transform-origin:50% 0;top:702px;font-size:8.400px;line-height:10px;color:#212529;font-weight:400;transform:scaleX(0.9072);">0</div>
<div class="t" style="left:591.00px;width:300px;text-align:center;transform-origin:50% 0;top:702px;font-size:8.400px;line-height:10px;color:#212529;font-weight:400;transform:scaleX(0.9163);">Not Approved</div>
<div class="t" style="left:665.00px;width:300px;text-align:center;transform-origin:50% 0;top:702px;font-size:8.400px;line-height:10px;color:#212529;font-weight:400;transform:scaleX(0.9072);">0</div>
<div class="t" style="left:725.50px;width:300px;text-align:center;transform-origin:50% 0;top:702px;font-size:8.400px;line-height:10px;color:#212529;font-weight:400;transform:scaleX(0.9072);">0</div>
<div class="r" style="left:948.70px;top:698.40px;width:21.20px;height:20.20px;background:#ffc107;border-radius:3px"></div>
<div class="r" style="left:972.00px;top:698.40px;width:21.10px;height:20.20px;background:#198754;border-radius:3px"></div>
<svg class="r" style="left:954.80px;top:704.20px" width="8" height="8" viewBox="0 0 8 8"><path d="M0.6 7.4 L1 5.6 L5.6 1 L7 2.4 L2.4 7Z" fill="#111"/><path d="M6 0.6 L6.6 0 L8 1.4 L7.4 2Z" fill="#111"/></svg>
<svg class="r" style="left:978.50px;top:704.40px" width="8" height="8" viewBox="0 0 8 8"><circle cx="4" cy="4" r="3.1" fill="none" stroke="#fff" stroke-width="1.1"/><path d="M4.6 2.2 L4 4.2 L3.2 5" fill="none" stroke="#fff" stroke-width="0.8" opacity="0.8"/></svg>
<div class="r" style="left:195.00px;top:725.23px;width:804.40px;height:33.63px;background:#ffffff"></div>
<div class="r" style="left:195.00px;top:725.23px;width:29.40px;height:33.63px;background:#fafafa"></div>
<div class="r" style="left:456.00px;top:725.23px;width:191.30px;height:33.63px;background:#dc3545"></div>
<div class="r" style="left:195.00px;top:757.86px;width:804.40px;height:1.00px;background:rgba(222,226,230,0.8)"></div>
<div class="t" style="left:59.70px;width:300px;text-align:center;transform-origin:50% 0;top:736px;font-size:8.400px;line-height:10px;color:#212529;font-weight:400;transform:scaleX(0.9072);">12</div>
<div class="t" style="left:100.20px;width:300px;text-align:center;transform-origin:50% 0;top:736px;font-size:8.400px;line-height:10px;color:#212529;font-weight:400;transform:scaleX(0.9072);">2024-11-04</div>
<div class="t" style="left:171.00px;width:300px;text-align:center;transform-origin:50% 0;top:736px;font-size:8.400px;line-height:10px;color:#212529;font-weight:400;transform:scaleX(0.8877);">Abdul Rehman</div>
<div class="t" style="left:261.00px;width:300px;text-align:center;transform-origin:50% 0;top:736px;font-size:8.400px;line-height:10px;color:#212529;font-weight:400;transform:scaleX(0.8877);">Hira Tech</div>
<div class="t" style="left:333.25px;width:300px;text-align:center;transform-origin:50% 0;top:736px;font-size:8.400px;line-height:10px;color:#fff;font-weight:400;-webkit-text-stroke:0.05px #fff;transform:scaleX(0.8409);">07:00 (06:30)</div>
<div class="t" style="left:392.75px;width:300px;text-align:center;transform-origin:50% 0;top:736px;font-size:8.400px;line-height:10px;color:#fff;font-weight:400;-webkit-text-stroke:0.05px #fff;transform:scaleX(0.8850);">Working (14:00)</div>
<div class="t" style="left:461.15px;width:300px;text-align:center;transform-origin:50% 0;top:736px;font-size:8.400px;line-height:10px;color:#fff;font-weight:400;-webkit-text-stroke:0.05px #fff;transform:scaleX(0.8680);">0 (7)</div>
<div class="t" style="left:524.65px;width:300px;text-align:center;transform-origin:50% 0;top:736px;font-size:8.400px;line-height:10px;color:#212529;font-weight:400;transform:scaleX(0.9072);">0</div>
<div class="t" style="left:591.00px;width:300px;text-align:center;transform-origin:50% 0;top:736px;font-size:8.400px;line-height:10px;color:#212529;font-weight:400;transform:scaleX(0.9163);">Not Approved</div>
<div class="t" style="left:665.00px;width:300px;text-align:center;transform-origin:50% 0;top:736px;font-size:8.400px;line-height:10px;color:#212529;font-weight:400;transform:scaleX(0.9072);">0</div>
<div class="t" style="left:725.50px;width:300px;text-align:center;transform-origin:50% 0;top:736px;font-size:8.400px;line-height:10px;color:#212529;font-weight:400;transform:scaleX(0.9072);">0</div>
<div class="r" style="left:948.70px;top:732.03px;width:21.20px;height:20.20px;background:#ffc107;border-radius:3px"></div>
<div class="r" style="left:972.00px;top:732.03px;width:21.10px;height:20.20px;background:#198754;border-radius:3px"></div>
<svg class="r" style="left:954.80px;top:737.83px" width="8" height="8" viewBox="0 0 8 8"><path d="M0.6 7.4 L1 5.6 L5.6 1 L7 2.4 L2.4 7Z" fill="#111"/><path d="M6 0.6 L6.6 0 L8 1.4 L7.4 2Z" fill="#111"/></svg>
<svg class="r" style="left:978.50px;top:738.03px" width="8" height="8" viewBox="0 0 8 8"><circle cx="4" cy="4" r="3.1" fill="none" stroke="#fff" stroke-width="1.1"/><path d="M4.6 2.2 L4 4.2 L3.2 5" fill="none" stroke="#fff" stroke-width="0.8" opacity="0.8"/></svg>
<div class="r" style="left:195.00px;top:758.86px;width:804.40px;height:33.63px;background:#f9f9f9"></div>
<div class="r" style="left:195.00px;top:758.86px;width:29.40px;height:33.63px;background:#f1f1f1"></div>
<div class="r" style="left:456.00px;top:758.86px;width:191.30px;height:33.63px;background:#dc3545"></div>
<div class="r" style="left:195.00px;top:791.49px;width:804.40px;height:1.00px;background:rgba(222,226,230,0.8)"></div>
<div class="r" style="left:948.70px;top:765.66px;width:21.20px;height:20.20px;background:#ffc107;border-radius:3px"></div>
<div class="r" style="left:972.00px;top:765.66px;width:21.10px;height:20.20px;background:#198754;border-radius:3px"></div>
<svg class="r" style="left:954.80px;top:771.46px" width="8" height="8" viewBox="0 0 8 8"><path d="M0.6 7.4 L1 5.6 L5.6 1 L7 2.4 L2.4 7Z" fill="#111"/><path d="M6 0.6 L6.6 0 L8 1.4 L7.4 2Z" fill="#111"/></svg>
<svg class="r" style="left:978.50px;top:771.66px" width="8" height="8" viewBox="0 0 8 8"><circle cx="4" cy="4" r="3.1" fill="none" stroke="#fff" stroke-width="1.1"/><path d="M4.6 2.2 L4 4.2 L3.2 5" fill="none" stroke="#fff" stroke-width="0.8" opacity="0.8"/></svg>
</body></html>
